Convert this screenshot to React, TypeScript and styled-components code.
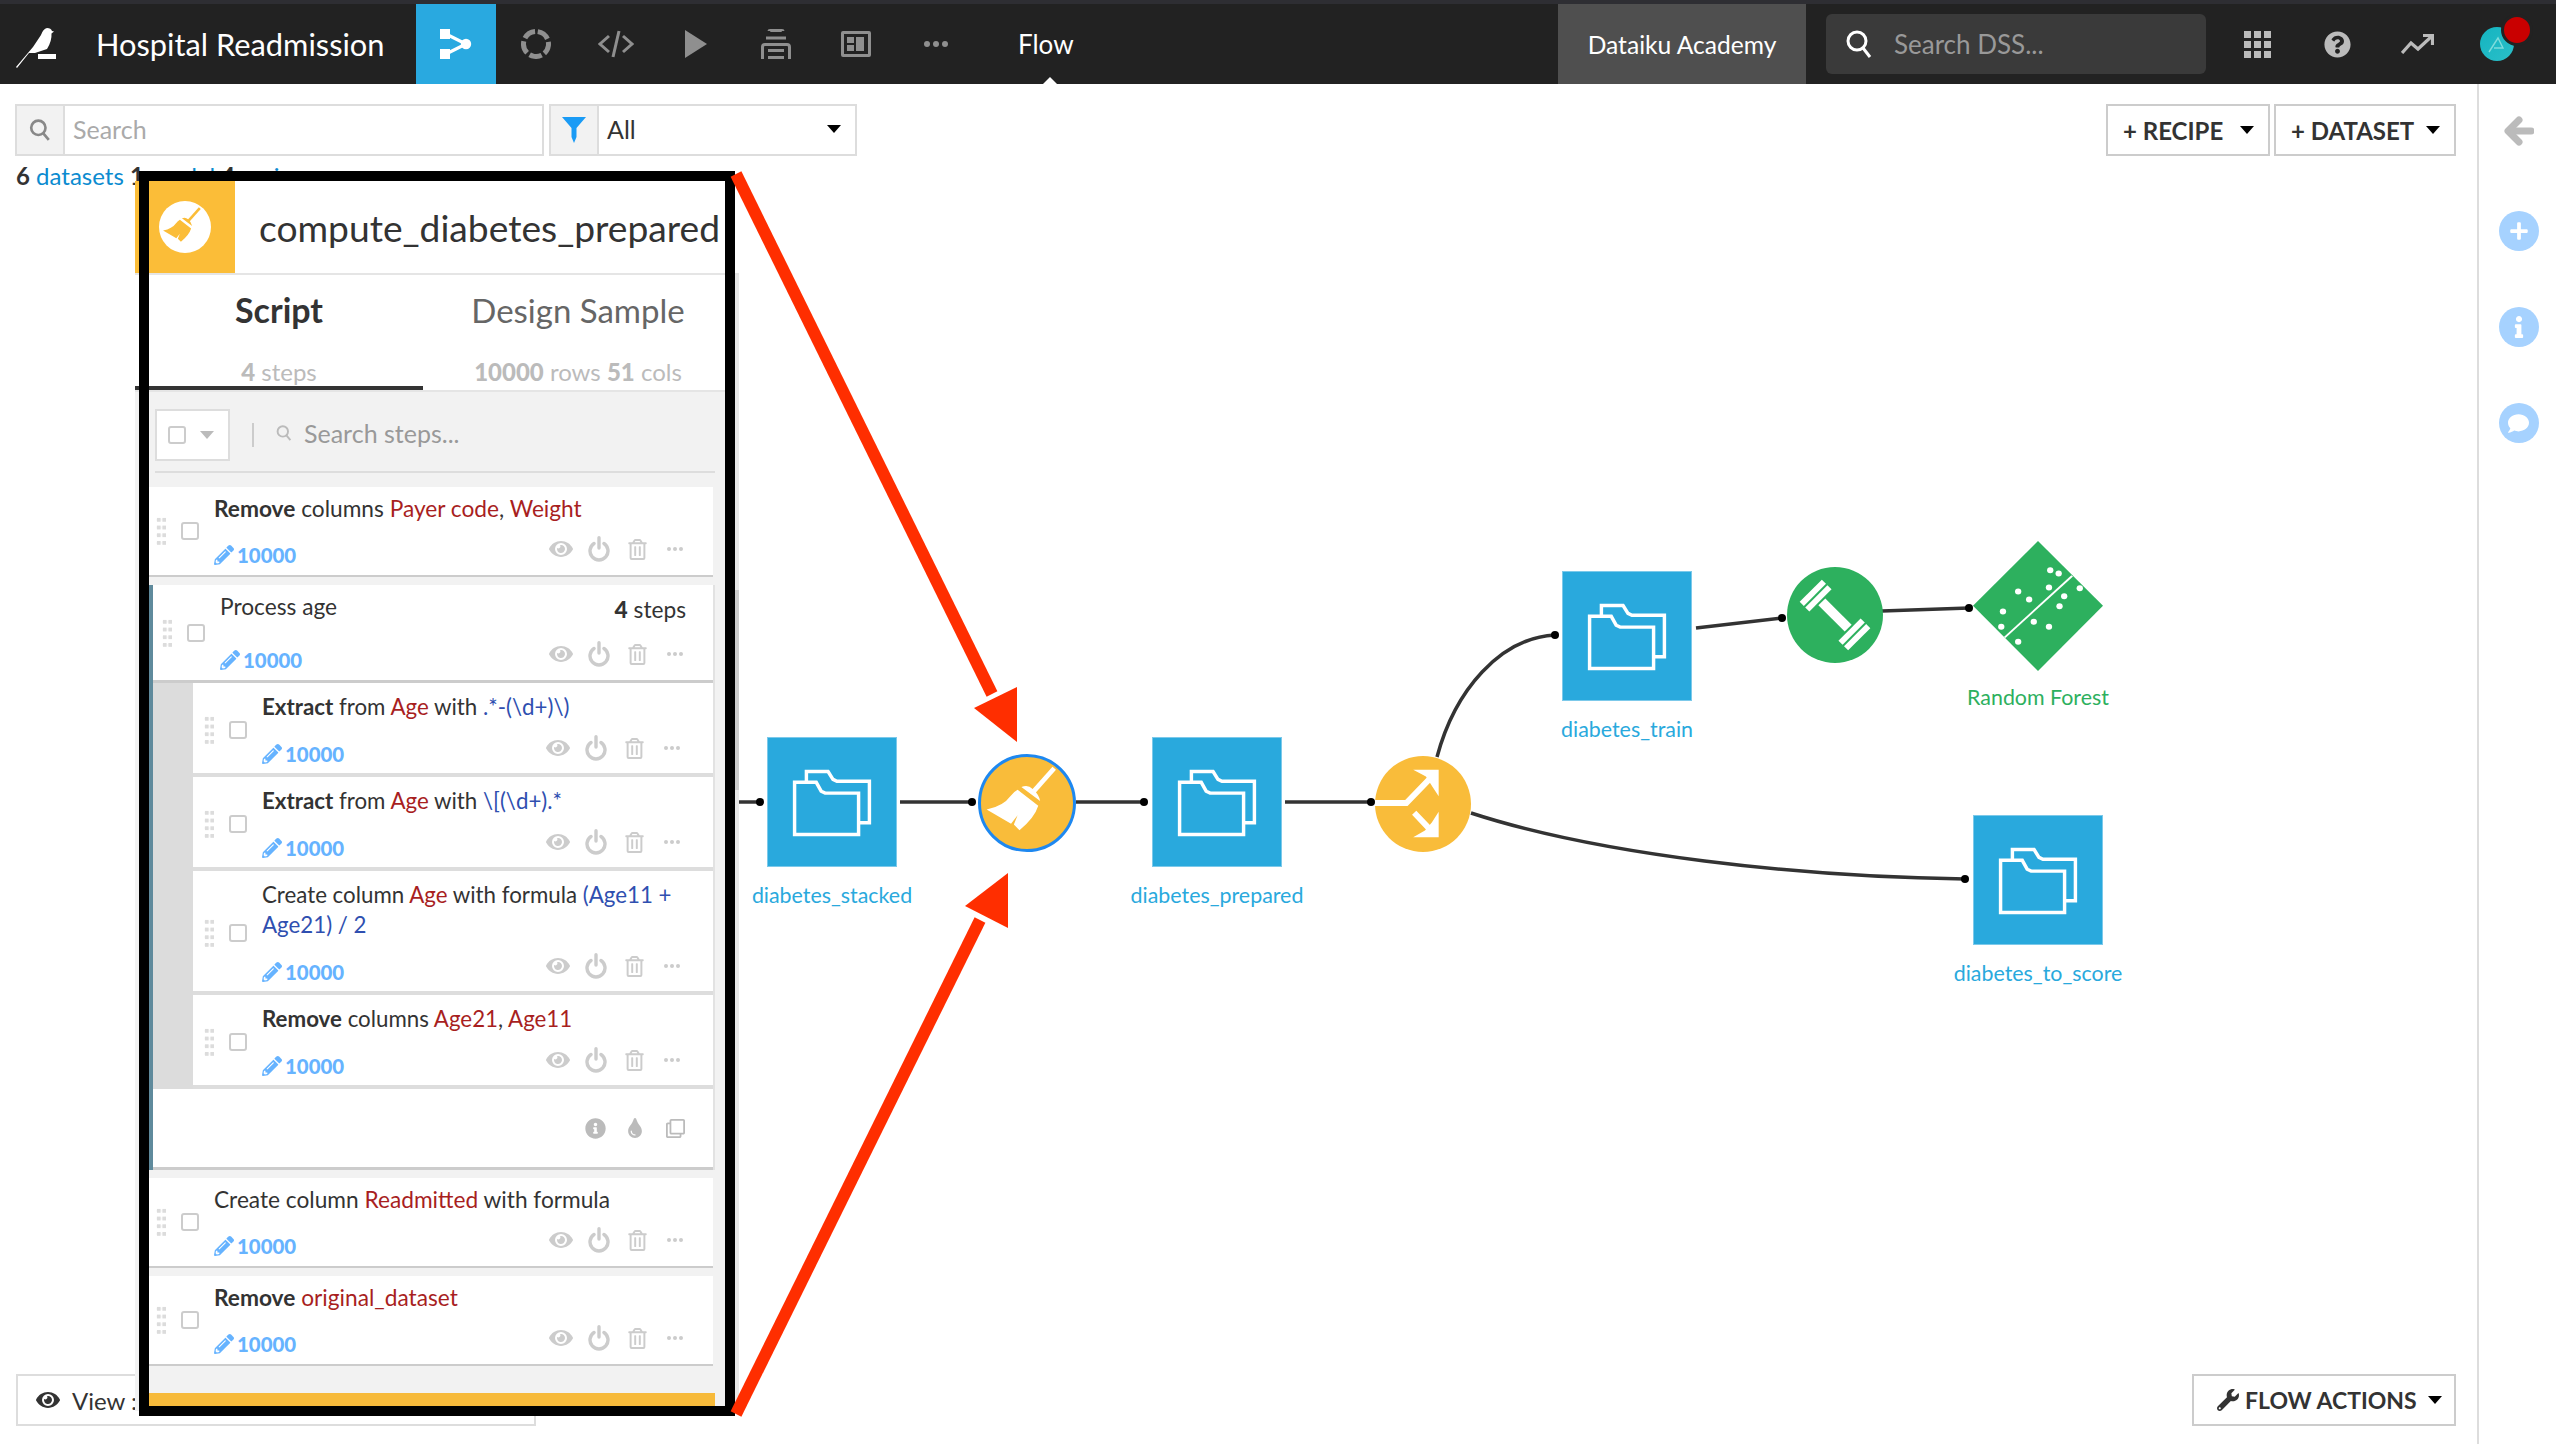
import React from 'react';
import styled, { createGlobalStyle } from 'styled-components';
import { FaEye, FaPencilAlt, FaWrench, FaQuestionCircle, FaPlus, FaInfo, FaComment, FaRegTrashAlt, FaInfoCircle, FaTint, FaRegClone } from 'react-icons/fa';

const FONT = `Lato, "Noto Sans", "Liberation Sans", sans-serif`;

const Global = createGlobalStyle`
  html, body { margin: 0; padding: 0; background: #fff; }
  body { font-family: ${FONT}; color: #333; }
  * { box-sizing: border-box; }
`;

const Page = styled.div`
  position: relative; width: 2556px; height: 1444px; overflow: hidden;
  display: flex; flex-direction: column; background: #fff;
`;

/* ---------- top navigation ---------- */
const Nav = styled.header`
  height: 84px; flex: none; display: flex; align-items: stretch;
  background: #222; border-top: 4px solid #2e2e33; color: #fff;
`;
const Logo = styled.div`width: 96px; padding: 24px 0 0 16px;`;
const ProjectName = styled.div`
  width: 320px; display: flex; align-items: center; font-size: 30.8px; color: #fff;
`;
const NavIcon = styled.div<{ $active?: boolean }>`
  width: 80px; display: flex; align-items: center; justify-content: center;
  background: ${p => (p.$active ? '#29a9e0' : 'transparent')};
  color: ${p => (p.$active ? '#fff' : '#8f8f8f')};
`;
const Current = styled.div`
  position: relative; margin-left: 42px; display: flex; align-items: center;
  font-size: 26px; color: #fff;
  &::after {
    content: ''; position: absolute; left: 25px; bottom: 0;
    border: 7px solid transparent; border-top: 0; border-bottom-color: #fff;
  }
`;
const Grow = styled.div`flex: 1;`;
const Academy = styled.div`
  width: 248px; display: flex; align-items: center; justify-content: center;
  background: #4f4f4f; font-size: 24.6px; color: #fff;
`;
const GlobalSearch = styled.div`
  width: 380px; height: 60px; margin: 10px 11px 0 20px; padding-left: 20px;
  display: flex; align-items: center; gap: 22px;
  background: #3a3a3a; border-radius: 6px; color: #fff;
  span { font-size: 26px; color: #999; }
`;
const RightIcon = styled.div`
  width: 80px; display: flex; align-items: center; justify-content: center; color: #bbb;
`;
const RightIcons = styled.div`display: flex; padding-right: 19px;`;
const Avatar = styled.div`
  position: relative; width: 34px; height: 34px; border-radius: 50%;
  background: linear-gradient(135deg, #14b4c0, #2bbfc9);
  display: flex; align-items: center; justify-content: center;
  &::after {
    content: ''; position: absolute; left: 21px; top: -13px; width: 26px; height: 26px;
    border-radius: 50%; background: #c90000; border: 3px solid #222;
  }
`;

/* ---------- body ---------- */
const Body = styled.main`flex: 1; display: flex; min-height: 0;`;
const Content = styled.section`
  flex: 1; display: flex; flex-direction: column; padding: 20px 21px 18px 15px;
`;
const Toolbar = styled.div`display: flex; align-items: stretch; height: 52px;`;
const InputGroup = styled.div<{ $w: number }>`
  width: ${p => p.$w}px; margin-right: 5px; display: flex; border: 2px solid #ddd; background: #fff;
`;
const AddOn = styled.div`
  width: 48px; flex: none; display: flex; align-items: center; justify-content: center;
  background: #f2f2f2; border-right: 2px solid #ddd;
`;
const FieldText = styled.div<{ $muted?: boolean }>`
  flex: 1; display: flex; align-items: center; justify-content: space-between;
  padding: 0 14px 2px 8px; font-size: 25px; color: ${p => (p.$muted ? '#aaa' : '#333')};
`;
const Caret = styled.i<{ $color?: string }>`
  display: inline-block; border: 7px solid transparent; border-bottom: 0;
  border-top: 8px solid ${p => p.$color ?? '#000'};
`;
const Btn = styled.div<{ $w?: number }>`
  height: 52px; width: ${p => (p.$w ? `${p.$w}px` : 'auto')};
  display: flex; align-items: center; justify-content: space-between; padding: 0 14px 0 15px;
  border: 2px solid #ccc; background: #fff; font-size: 24px; font-weight: 700; color: #333; white-space: nowrap;
`;
const BtnGap = styled.div`width: 4px;`;
const Stats = styled.div`
  margin: 2px 0 0 1px; line-height: 36px; font-size: 24px;
  b { font-weight: 700; } a { color: #0b8bd0; }
`;
const BottomBar = styled.div`margin-top: auto; display: flex; justify-content: space-between;`;
const ViewBox = styled(Btn)`
  margin-left: 1px; font-weight: 400; padding-left: 18px; border-color: #ddd; justify-content: flex-start; gap: 12px;
`;
const FlowActions = styled(Btn)`
  padding: 0 12px 0 23px; justify-content: flex-start; gap: 6px; font-size: 23px;
  ${Caret} { margin-left: auto; }
`;
const Rail = styled.aside`
  width: 79px; flex: none; border-left: 2px solid #ddd; display: flex; flex-direction: column;
  align-items: center; padding: 32px 0 0 2px; color: #bbb;
`;
const RailCircle = styled.div<{ $top: number }>`
  width: 40px; height: 40px; margin-top: ${p => p.$top}px; border-radius: 50%; background: #a6d2ff;
  color: #fff; display: flex; align-items: center; justify-content: center;
`;

/* ---------- flow canvas ---------- */
const CanvasLayer = styled.div`position: absolute; inset: 0; pointer-events: none;`;
const Edges = styled.svg`position: absolute; inset: 0; width: 2556px; height: 1444px; pointer-events: none;`;
const Node = styled.div<{ $x: number; $y: number; $w?: number }>`
  position: absolute; left: ${p => p.$x}px; top: ${p => p.$y}px; width: ${p => p.$w ?? 130}px;
  display: flex; flex-direction: column; align-items: center;
`;
const DatasetBox = styled.div`
  width: 130px; height: 130px; background: #29a9dd; border: 1px solid #7cc9ea;
  display: flex; align-items: center; justify-content: center;
`;
const NodeLabel = styled.div<{ $color: string; $gap: number }>`
  margin-top: ${p => p.$gap}px; line-height: 30px; font-size: 21.4px; white-space: nowrap; color: ${p => p.$color};
`;
const RecipeDot = styled.div<{ $bg: string; $ring?: boolean; $size: number }>`
  width: ${p => p.$size}px; height: ${p => p.$size}px; border-radius: 50%; background: ${p => p.$bg};
  border: ${p => (p.$ring ? '3px solid #1e88f0' : '0')};
  display: flex; align-items: center; justify-content: center; color: #fff;
`;

/* ---------- recipe panel ---------- */
const Panel = styled.aside`
  position: absolute; left: 135px; top: 181px; width: 604px; height: 1230px;
  display: flex; flex-direction: column; background: #f2f2f2; overflow: hidden;
`;
const ScrollTrack = styled.div`
  position: absolute; right: 0; top: 94px; bottom: 0; width: 4px; background: #e8e8e8;
`;
const ScrollThumb = styled.div`
  position: absolute; left: 0; top: 315px; width: 4px; height: 200px; background: #ccc;
`;
const PanelHead = styled.div`
  height: 94px; flex: none; display: flex; background: #fff; border-bottom: 2px solid #e5e5e5;
`;
const HeadIcon = styled.div`
  width: 100px; background: #fbbd38; display: flex; align-items: center; justify-content: center;
`;
const HeadDisc = styled.div`
  width: 52px; height: 52px; border-radius: 50%; background: #fff; color: #fbbd38;
  display: flex; align-items: center; justify-content: center;
`;
const PanelTitle = styled.div`
  margin-left: 24px; display: flex; align-items: center; font-size: 37.2px; color: #333; white-space: nowrap;
`;
const Tabs = styled.div`
  height: 117px; flex: none; display: flex; background: #fff; border-bottom: 2px solid #e5e5e5;
  padding-right: 6px;
`;
const Tab = styled.div<{ $active?: boolean }>`
  flex: ${p => (p.$active ? '0 0 288px' : '1')}; height: 115px; padding-top: 15px;
  display: flex; flex-direction: column; align-items: center;
  border-bottom: 4px solid ${p => (p.$active ? '#333' : 'transparent')};
`;
const TabTitle = styled.div<{ $active?: boolean }>`
  line-height: 40px; font-size: ${p => (p.$active ? 34 : 33)}px; font-weight: ${p => (p.$active ? 700 : 400)};
  color: ${p => (p.$active ? '#333' : '#666')};
`;
const TabSub = styled.div`
  margin-top: 27px; line-height: 30px; font-size: 24px; color: #bbb; b { font-weight: 900; }
`;
const StepsBar = styled.div`
  margin: 0 24px 14px 20px; flex: none; height: 81px; padding-top: 17px;
  display: flex; align-items: flex-start; border-bottom: 2px solid #ddd;
`;
const MassBox = styled.div`
  width: 75px; height: 52px; display: flex; align-items: center; gap: 14px; padding-left: 11px;
  border: 2px solid #ddd; background: #fff;
`;
const Check = styled.i`
  display: block; width: 18px; height: 18px; flex: none; border: 2px solid #ccc; border-radius: 3px; background: #fff;
`;
const Divider = styled.div`width: 2px; height: 24px; margin: 14px 22px 0; background: #ccc;`;
const StepSearch = styled.div`
  display: flex; align-items: center; height: 48px; gap: 12px; font-size: 25px; color: #999;
`;
const List = styled.div`display: flex; flex-direction: column; gap: 8px; padding: 0 26px 0 14px;`;
const Grip = styled.i`
  display: block; width: 10px; height: 30px; flex: none;
  background-image: radial-gradient(circle, #dcdcdc 2px, transparent 2.4px);
  background-size: 5.5px 7.7px;
`;
type Kind = 'top' | 'head' | 'sub';
const StepRow = styled.div<{ $kind: Kind }>`
  display: flex; align-items: center; background: #fff;
  padding-left: ${p => (p.$kind === 'top' ? 7 : p.$kind === 'head' ? 9 : 11)}px;
  padding-right: ${p => (p.$kind === 'sub' ? 30 : 27)}px;
  padding-top: ${p => (p.$kind === 'sub' ? 9 : 7)}px;
  padding-bottom: ${p => (p.$kind === 'sub' ? 6 : 7)}px;
  border-bottom: ${p => (p.$kind === 'top' ? '2px solid #ccc' : p.$kind === 'head' ? '3px solid #ccc' : '4px solid #ddd')};
  ${Check} { margin: 0 15px; }
`;
const StepBody = styled.div`flex: 1; min-width: 0; align-self: flex-start;`;
const TitleRow = styled.div`display: flex; justify-content: space-between; align-items: flex-start;`;
const StepTitle = styled.div<{ $kind: Kind }>`
  line-height: 30px; font-size: ${p => (p.$kind === 'sub' ? 22.3 : 22.7)}px; color: #333;
  b { font-weight: 700; } em { font-style: normal; color: #a81f1f; } u { text-decoration: none; color: #2f4fb0; }
`;
const StepCount = styled.div`
  padding-top: 3px; margin-bottom: -3px; line-height: 30px; font-size: 22.7px; color: #333; b { font-weight: 900; }
`;
const Meta = styled.div<{ $gap: number }>`
  margin-top: ${p => p.$gap}px; height: 26px; display: flex; justify-content: space-between; align-items: center;
`;
const Count = styled.div`
  display: flex; align-items: center; gap: 3px; font-size: 20.4px; font-weight: 900; color: #66b3ff; line-height: 26px;
`;
const Actions = styled.div`display: flex; margin: -12px -8px 0 0; color: #ccc;`;
const Slot = styled.div`width: 38px; height: 26px; display: flex; align-items: center; justify-content: center;`;
const Group = styled.div`display: flex; flex-direction: column; border-left: 4px solid #5f8a9c; box-shadow: 2px 0 0 #e2e2e2;`;
const SubList = styled.div`padding-left: 40px; background: #dcdcdc; display: flex; flex-direction: column;`;
const GroupFoot = styled.div`
  height: 81px; padding: 0 18px 0 0; display: flex; align-items: center; justify-content: flex-end;
  background: #fff; border-bottom: 3px solid #ccc; color: #bbb;
`;
const FootSlot = styled.div`width: 40px; display: flex; justify-content: center;`;
const YellowBar = styled.div`flex: none; height: 18px; margin: auto 24px 0 14px; background: #f7ba3a;`;

/* ---------- annotation ---------- */
const Frame = styled.div`
  position: absolute; left: 139px; top: 171px; width: 596px; height: 1245px;
  border: 10px solid #000; pointer-events: none;
`;

/* ---------- drawings ---------- */
const Folder = () => (
  <svg width="130" height="130" viewBox="0 0 130 130" fill="none" stroke="#fff" strokeWidth="3.5">
    <path d="M39 44V34H61L66 42L70 44H103V86H92" />
    <path d="M27 45H49L54 54L58 56H92V98H27Z" />
  </svg>
);
const Broom = ({ size }: { size: number }) => (
  <svg width={size} height={size} viewBox="0 0 98 98" fill="currentColor">
    <path d="M54 39L78 12" stroke="currentColor" strokeWidth="5" fill="none" />
    <path d="M43 32Q50 29 55 34Q62 40 63 47Z" />
    <path d="M39 35L61 52Q57 65 41 78L35 72L39 62L32 71L6 56Q24 52 31 42Q35 37 39 35Z" />
  </svg>
);
const Power = () => (
  <svg width="22" height="26" viewBox="0 0 22 26" fill="none" stroke="currentColor" strokeWidth="3.4" strokeLinecap="round">
    <path d="M11 1.8V12" /><path d="M6 7.5a9 9 0 1 0 10 0" />
  </svg>
);
const Dots = () => (
  <svg width="16" height="4" viewBox="0 0 16 4" fill="currentColor">
    <circle cx="2" cy="2" r="2" /><circle cx="8" cy="2" r="2" /><circle cx="14" cy="2" r="2" />
  </svg>
);
const Magnifier = ({ size, color }: { size: number; color: string }) => (
  <svg width={size} height={size} viewBox="0 0 20 20" fill="none" stroke={color} strokeWidth="2.4">
    <circle cx="8.5" cy="8" r="6.5" /><path d="M13 13L18 19" />
  </svg>
);
const StepActions = () => (
  <Actions>
    <Slot><FaEye size={24} /></Slot>
    <Slot><Power /></Slot>
    <Slot><FaRegTrashAlt size={21} /></Slot>
    <Slot><Dots /></Slot>
  </Actions>
);
const Records = () => (
  <Count><FaPencilAlt size={20} />10000</Count>
);

const Step = ({ kind, children, gap, right }: { kind: Kind; children: React.ReactNode; gap: number; right?: React.ReactNode }) => (
  <StepRow $kind={kind}>
    <Grip />
    <Check />
    <StepBody>
      <TitleRow>
        <StepTitle $kind={kind}>{children}</StepTitle>
        {right}
      </TitleRow>
      <Meta $gap={gap}>
        <Records />
        <StepActions />
      </Meta>
    </StepBody>
  </StepRow>
);

const FlowGlyph = () => (
  <svg width="32" height="30" viewBox="0 0 32 30" fill="#fff">
    <rect x="0" y="0" width="10" height="10" /><rect x="0" y="20" width="10" height="10" />
    <circle cx="26" cy="15" r="5.2" />
    <path d="M6 5L26 15L6 25" fill="none" stroke="#fff" strokeWidth="3.2" />
  </svg>
);
const BirdLogo = () => (
  <svg width="42" height="40" viewBox="0 0 42 40" fill="#fff">
    <path d="M0 39L17 19L25 7Q27 1 31 0Q35 0 36 3L38 3.5L35.5 5.5Q36 13 31 21L19 25H13L1 40Z" />
    <rect x="22" y="26" width="18" height="5" />
  </svg>
);

const ARROW = '#ff2e00';

export default function App() {
  return (
    <Page>
      <Global />
      <Nav>
        <Logo><BirdLogo /></Logo>
        <ProjectName>Hospital Readmission</ProjectName>
        <NavIcon $active><FlowGlyph /></NavIcon>
        <NavIcon>
          <svg width="30" height="30" viewBox="0 0 30 30" fill="none" stroke="currentColor" strokeWidth="5">
            <circle cx="15" cy="15" r="12.5" strokeDasharray="12.5 3.2" transform="rotate(-82 15 15)" />
          </svg>
        </NavIcon>
        <NavIcon>
          <svg width="36" height="28" viewBox="0 0 36 28" fill="none" stroke="currentColor" strokeWidth="3">
            <path d="M11 6L2 14L11 22" /><path d="M25 6L34 14L25 22" /><path d="M21 1L15 27" />
          </svg>
        </NavIcon>
        <NavIcon>
          <svg width="22" height="28" viewBox="0 0 22 28" fill="currentColor"><path d="M0 0L22 14L0 28Z" /></svg>
        </NavIcon>
        <NavIcon>
          <svg width="30" height="30" viewBox="0 0 30 30" fill="none" stroke="currentColor" strokeWidth="3">
            <path d="M8 2Q8 1.5 9 1.5H21Q22 1.5 22 2" />
            <path d="M5 9H25" />
            <path d="M1.5 30V18Q1.5 15.5 4 15.5H26Q28.5 15.5 28.5 18V30" />
            <path d="M7 21.5H23" /><path d="M7 28.5H23" />
          </svg>
        </NavIcon>
        <NavIcon>
          <svg width="30" height="26" viewBox="0 0 30 26" fill="currentColor">
            <path fillRule="evenodd" d="M2 0H28Q30 0 30 2V24Q30 26 28 26H2Q0 26 0 24V2Q0 0 2 0ZM3 3V23H27V3Z" />
            <rect x="6" y="6" width="7" height="6" /><rect x="6" y="14" width="7" height="6" /><rect x="15" y="6" width="8" height="14" />
          </svg>
        </NavIcon>
        <NavIcon>
          <svg width="24" height="6" viewBox="0 0 24 6" fill="currentColor">
            <circle cx="3" cy="3" r="3" /><circle cx="12" cy="3" r="3" /><circle cx="21" cy="3" r="3" />
          </svg>
        </NavIcon>
        <Current>Flow</Current>
        <Grow />
        <Academy>Dataiku Academy</Academy>
        <GlobalSearch>
          <svg width="26" height="28" viewBox="0 0 26 28" fill="none" stroke="#fff" strokeWidth="3">
            <circle cx="11" cy="11" r="9" /><path d="M17 18L24 27" />
          </svg>
          <span>Search DSS...</span>
        </GlobalSearch>
        <RightIcons>
          <RightIcon>
            <svg width="27" height="27" viewBox="0 0 27 27" fill="currentColor">
              {[0, 10, 20].map(x => [0, 10, 20].map(y => <rect key={`${x}-${y}`} x={x} y={y} width="7" height="7" />))}
            </svg>
          </RightIcon>
          <RightIcon><FaQuestionCircle size={27} /></RightIcon>
          <RightIcon>
            <svg width="33" height="20" viewBox="0 0 33 20" fill="none" stroke="currentColor" strokeWidth="3.2">
              <path d="M1 19L10 9L17 15L31 2" /><path d="M22 1.5H31.5V11" />
            </svg>
          </RightIcon>
          <RightIcon>
            <Avatar>
              <svg width="18" height="18" viewBox="0 0 18 18" fill="none" stroke="#7fdcdc" strokeWidth="1.4">
                <path d="M1 17L10 3L15 13H6" />
              </svg>
            </Avatar>
          </RightIcon>
        </RightIcons>
      </Nav>

      <Body>
        <Content>
          <Toolbar>
            <InputGroup $w={529}>
              <AddOn><Magnifier size={22} color="#888" /></AddOn>
              <FieldText $muted>Search</FieldText>
            </InputGroup>
            <InputGroup $w={308}>
              <AddOn>
                <svg width="24" height="26" viewBox="0 0 24 26" fill="#1a9bf5"><path d="M0 0H24L14.5 11V20L12 26L9.5 20V11Z" /></svg>
              </AddOn>
              <FieldText>All<Caret /></FieldText>
            </InputGroup>
            <Grow />
            <Btn $w={164}>+ RECIPE<Caret /></Btn>
            <BtnGap />
            <Btn $w={182}>+ DATASET<Caret /></Btn>
          </Toolbar>
          <Stats>
            <b>6</b> <a>datasets</a> <b>1</b> <a>model</a> <b>4</b> <a>recipes</a>
          </Stats>
          <BottomBar>
            <ViewBox $w={520}><FaEye size={24} />View :</ViewBox>
            <FlowActions $w={264}><FaWrench size={22} />FLOW ACTIONS<Caret /></FlowActions>
          </BottomBar>
        </Content>
        <Rail>
          <svg width="30" height="30" viewBox="0 0 30 30" fill="none" stroke="currentColor" strokeWidth="7" strokeLinecap="round" strokeLinejoin="round">
            <path d="M27 15H5" /><path d="M15 4L4 15L15 26" />
          </svg>
          <RailCircle $top={65}><FaPlus size={20} /></RailCircle>
          <RailCircle $top={56}><FaInfo size={22} /></RailCircle>
          <RailCircle $top={56}><FaComment size={21} /></RailCircle>
        </Rail>
      </Body>

      <CanvasLayer>
        <Edges viewBox="0 0 2556 1444" fill="none">
          <g stroke="#333" strokeWidth="3.5">
            <path d="M739 802H760" /><path d="M900 802H972" /><path d="M1076 802H1143" /><path d="M1285 802H1370" />
            <path d="M1437 757C1455 690 1500 638 1555 635" />
            <path d="M1696 628L1782 618" /><path d="M1882 611L1969 608" />
            <path d="M1471 813C1600 855 1800 877 1965 879" />
          </g>
          <g fill="#000">
            {[[760, 802], [972, 802], [1144, 802], [1371, 802], [1555, 635], [1782, 618], [1969, 608], [1965, 879]].map(([x, y]) => (
              <circle key={`${x}`} cx={x} cy={y} r="4" />
            ))}
          </g>
        </Edges>

        <Node $x={767} $y={737}><DatasetBox><Folder /></DatasetBox><NodeLabel $color="#29a9dd" $gap={13}>diabetes_stacked</NodeLabel></Node>
        <Node $x={1152} $y={737}><DatasetBox><Folder /></DatasetBox><NodeLabel $color="#29a9dd" $gap={13}>diabetes_prepared</NodeLabel></Node>
        <Node $x={1562} $y={571}><DatasetBox><Folder /></DatasetBox><NodeLabel $color="#29a9dd" $gap={13}>diabetes_train</NodeLabel></Node>
        <Node $x={1973} $y={815}><DatasetBox><Folder /></DatasetBox><NodeLabel $color="#29a9dd" $gap={13}>diabetes_to_score</NodeLabel></Node>

        <Node $x={978} $y={754} $w={98}><RecipeDot $size={98} $bg="#f9bc3a" $ring><Broom size={92} /></RecipeDot></Node>
        <Node $x={1375} $y={756} $w={96}>
          <RecipeDot $size={96} $bg="#f9bc3a">
            <svg width="96" height="96" viewBox="0 0 98 98" fill="#fff" stroke="none">
              <path d="M0 48H32L60 19M40 58L60 79" fill="none" stroke="#fff" strokeWidth="6" />
              <path d="M39 14H65V41L59 32L52 21Z" />
              <path d="M39 83H65V57L58 68L51 76Z" />
            </svg>
          </RecipeDot>
        </Node>
        <Node $x={1787} $y={567} $w={96}>
          <RecipeDot $size={96} $bg="#2db05e">
            <svg width="96" height="96" viewBox="-49 -49 98 98" fill="#fff">
              <g transform="rotate(45)">
                <rect x="-19" y="-5" width="38" height="10" />
                <rect x="-35" y="-16" width="6" height="32" /><rect x="-27" y="-16" width="6" height="32" />
                <rect x="21" y="-16" width="6" height="32" /><rect x="29" y="-16" width="6" height="32" />
              </g>
            </svg>
          </RecipeDot>
        </Node>
        <Node $x={1973} $y={541}>
          <svg width="130" height="130" viewBox="1125 62 308 391" preserveAspectRatio="none">
            <path d="M1279 62L1433 257L1279 453L1125 257Z" fill="#2db05e" />
            <path d="M1360 167L1200 352" stroke="#fff" strokeWidth="5" />
            <g fill="#fff">
              {[[1308, 150], [1328, 160], [1378, 204], [1305, 202], [1232, 214], [1258, 238], [1341, 228], [1330, 258], [1196, 274], [1269, 305], [1305, 320], [1192, 320], [1232, 365]].map(([x, y]) => (
                <ellipse key={`${x}-${y}`} cx={x} cy={y} rx="7.5" ry="9" />
              ))}
            </g>
          </svg>
          <NodeLabel $color="#2db05e" $gap={11}>Random Forest</NodeLabel>
        </Node>
      </CanvasLayer>

      <Panel>
        <ScrollTrack><ScrollThumb /></ScrollTrack>
        <PanelHead>
          <HeadIcon><HeadDisc><Broom size={50} /></HeadDisc></HeadIcon>
          <PanelTitle>compute_diabetes_prepared</PanelTitle>
        </PanelHead>
        <Tabs>
          <Tab $active>
            <TabTitle $active>Script</TabTitle>
            <TabSub><b>4</b> steps</TabSub>
          </Tab>
          <Tab>
            <TabTitle>Design Sample</TabTitle>
            <TabSub><b>10000</b> rows <b>51</b> cols</TabSub>
          </Tab>
        </Tabs>
        <StepsBar>
          <MassBox><Check /><Caret $color="#bbb" /></MassBox>
          <Divider />
          <StepSearch><Magnifier size={16} color="#bbb" />Search steps...</StepSearch>
        </StepsBar>
        <List>
          <Step kind="top" gap={18}><b>Remove</b> columns <em>Payer code</em>, <em>Weight</em></Step>
          <Group>
            <Step kind="head" gap={25} right={<StepCount><b>4</b> steps</StepCount>}>Process age</Step>
            <SubList>
              <Step kind="sub" gap={19}><b>Extract</b> from <em>Age</em> with <u>.*-(\d+)\)</u></Step>
              <Step kind="sub" gap={19}><b>Extract</b> from <em>Age</em> with <u>\[(\d+).*</u></Step>
              <Step kind="sub" gap={19}>Create column <em>Age</em> with formula <u>(Age11 + Age21) / 2</u></Step>
              <Step kind="sub" gap={19}><b>Remove</b> columns <em>Age21</em>, <em>Age11</em></Step>
            </SubList>
            <GroupFoot>
              <FootSlot><FaInfoCircle size={21} /></FootSlot>
              <FootSlot><FaTint size={20} /></FootSlot>
              <FootSlot><FaRegClone size={19} /></FootSlot>
            </GroupFoot>
          </Group>
          <Step kind="top" gap={18}>Create column <em>Readmitted</em> with formula</Step>
          <Step kind="top" gap={18}><b>Remove</b> <em>original_dataset</em></Step>
        </List>
        <YellowBar />
      </Panel>

      <Frame />
      <Edges viewBox="0 0 2556 1444">
        <path d="M736 174L992 694" stroke={ARROW} strokeWidth="12" fill="none" />
        <path d="M1017 687L974 708L1017 742Z" fill={ARROW} />
        <path d="M736 1414L980 920" stroke={ARROW} strokeWidth="12" fill="none" />
        <path d="M1008 873L965 906L1008 928Z" fill={ARROW} />
      </Edges>
    </Page>
  );
}
